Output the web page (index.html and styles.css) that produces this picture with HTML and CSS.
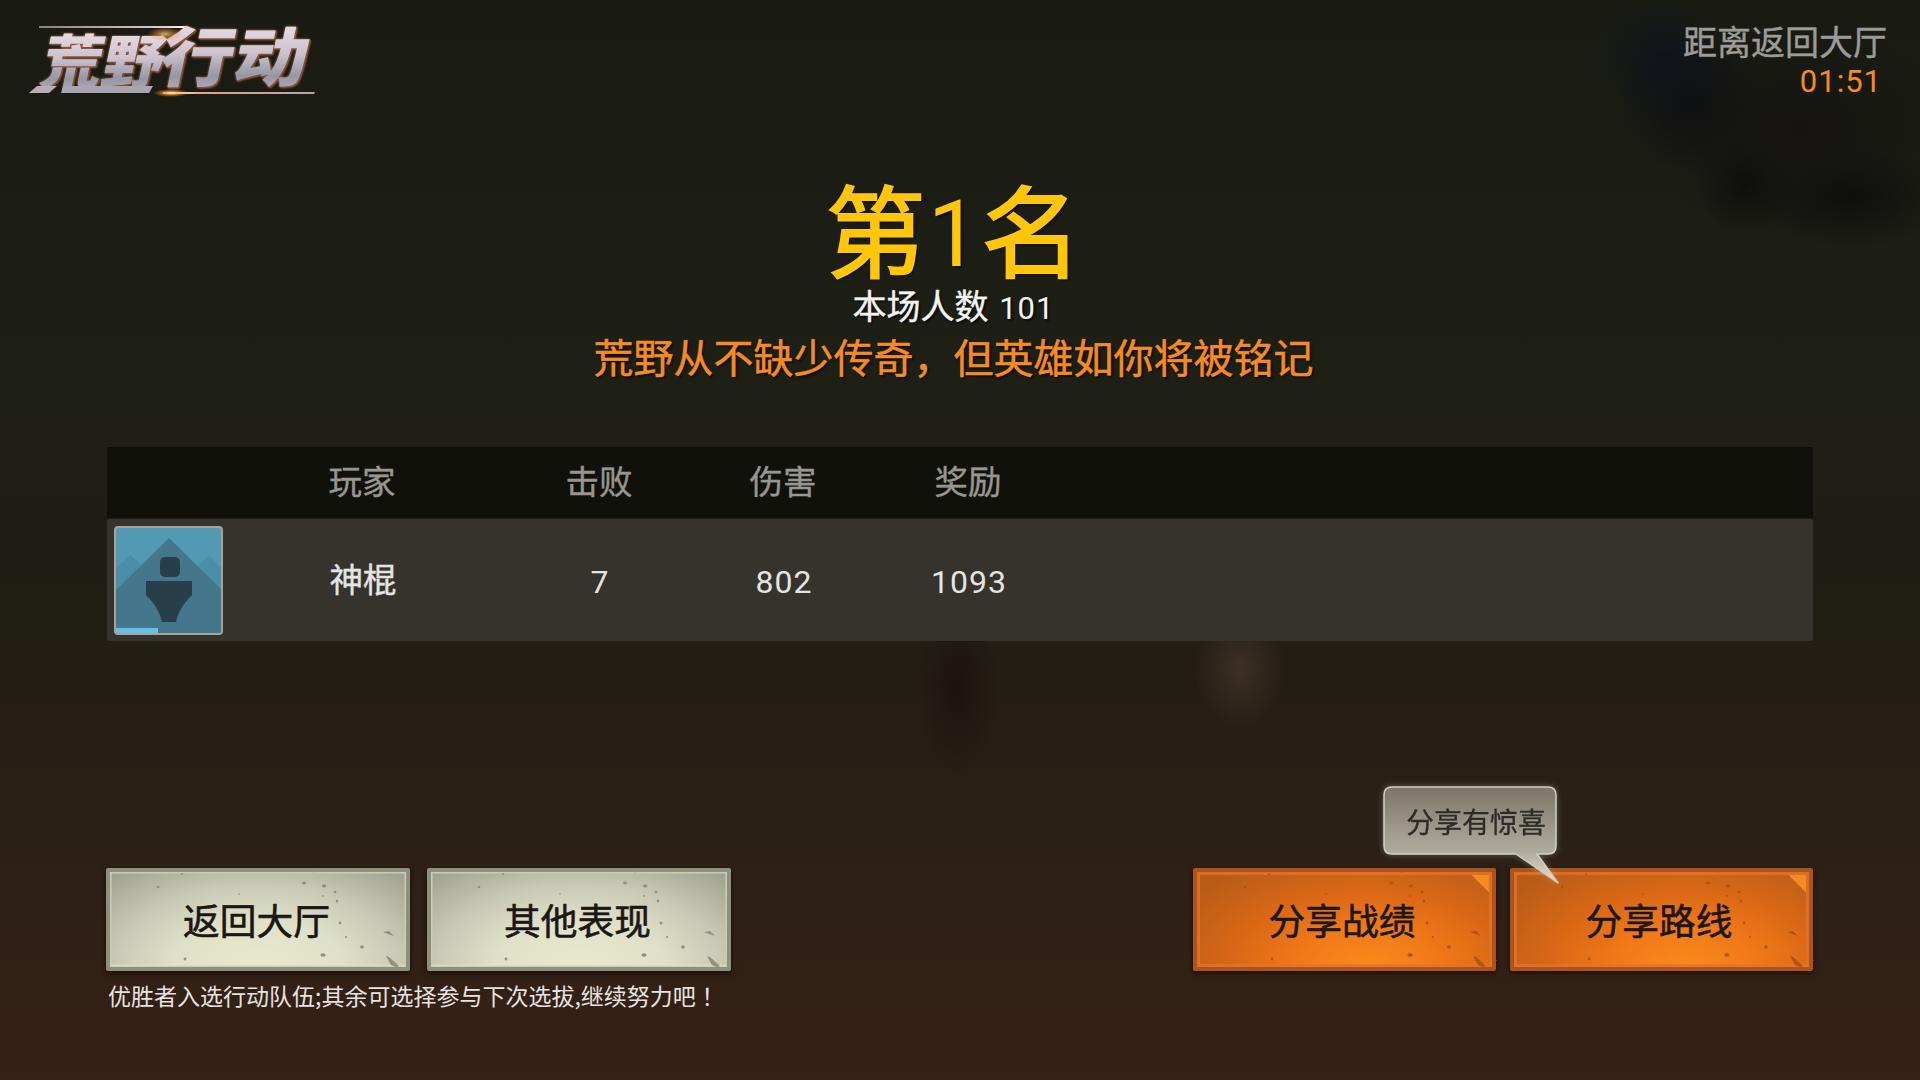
FILE: index.html
```
<!DOCTYPE html>
<html lang="zh-CN">
<head>
    <meta charset="UTF-8">
    <title>荒野行动 - 结算</title>
    <link rel="stylesheet" href="styles.css">
</head>
<body>
    <!-- Shared shapes -->
    <svg class="defs" width="0" height="0">
        <symbol id="scratches" viewBox="0 0 304 103">
            <g fill="currentColor">
                <ellipse cx="198" cy="15" rx="2" ry="1.4"/>
                <ellipse cx="218" cy="18" rx="2.2" ry="1.4"/>
                <ellipse cx="229" cy="24" rx="1.4" ry="1.3"/>
                <ellipse cx="231" cy="33" rx="1.3" ry="1.5"/>
                <circle cx="217" cy="28" r="0.9"/>
                <circle cx="234" cy="55" r="1.4"/>
                <circle cx="240" cy="69" r="1"/>
                <circle cx="256" cy="79" r="1.8"/>
                <ellipse cx="217" cy="87" rx="2.6" ry="1.8"/>
                <circle cx="79" cy="91" r="1.4"/>
                <circle cx="52" cy="19" r="1.3"/>
                <circle cx="76" cy="6" r="1"/>
                <circle cx="133" cy="26" r="0.8"/>
                <circle cx="208" cy="3" r="1.4"/>
                <circle cx="301" cy="27" r="1.2"/>
                <path d="M277 64l6-1 5 5-6-2z"/>
                <path d="M280 88l3 1 10 9-3 1-5-2z"/>
                <path d="M300 91l4 1-2 3z"/>
            </g>
        </symbol>
    </svg>

    <header class="top">
        <svg class="logo" width="300" height="84" viewBox="0 0 300 84">
            <defs>
                <linearGradient id="metal" x1="0" y1="0" x2="0" y2="1">
                    <stop offset="0.1" stop-color="#efe3e9"/>
                    <stop offset="0.5" stop-color="#cdc4d0"/>
                    <stop offset="0.75" stop-color="#9596a6"/>
                    <stop offset="1" stop-color="#c6b9bd"/>
                </linearGradient>
                <linearGradient id="line-top" x1="0" x2="1">
                    <stop offset="0" stop-color="#8b7f85"/>
                    <stop offset="0.8" stop-color="#d8cccf"/>
                    <stop offset="0.96" stop-color="#fff3d8"/>
                    <stop offset="1" stop-color="#e58c4a"/>
                </linearGradient>
                <linearGradient id="line-bottom" x1="0" x2="1">
                    <stop offset="0" stop-color="#ff8f32"/>
                    <stop offset="0.08" stop-color="#fff0c4"/>
                    <stop offset="0.25" stop-color="#e0a48c"/>
                    <stop offset="1" stop-color="#b7a5aa"/>
                </linearGradient>
                <radialGradient id="spark">
                    <stop offset="0" stop-color="#fff6d6"/>
                    <stop offset="0.3" stop-color="#ffb45c" stop-opacity="0.8"/>
                    <stop offset="1" stop-color="#ff7a20" stop-opacity="0"/>
                </radialGradient>
            </defs>
            <g class="logo-text" fill="url(#metal)">
                <text transform="translate(23 67) skewX(-12) scale(1 0.88)" font-size="66" textLength="122" lengthAdjust="spacingAndGlyphs">荒野</text>
                <text transform="translate(141 65) skewX(-12) scale(1 0.98)" font-size="66" textLength="148" lengthAdjust="spacingAndGlyphs">行动</text>
            </g>
            <path d="M14 77l8-7h20l-8 7z" fill="#b9aeb7"/>
            <path d="M48 70h90l-4 7H46z" fill="#a9a5b1"/>
            <path d="M24 10h150l-5 2H24z" fill="url(#line-top)"/>
            <path d="M148 76h152l-1 2H148z" fill="url(#line-bottom)"/>
            <ellipse cx="150" cy="18" rx="18" ry="7" fill="url(#spark)" opacity="0.7"/>
            <ellipse cx="156" cy="77" rx="18" ry="4" fill="url(#spark)"/>
        </svg>
        <div class="countdown">
            <p>距离返回大厅</p>
            <p class="time">01:51</p>
        </div>
    </header>

    <section class="result">
        <h1>第<span>1</span>名</h1>
        <p class="total">本场人数 <span>101</span></p>
        <p class="slogan">荒野从不缺少传奇，但英雄如你将被铭记</p>
    </section>

    <section class="board">
        <div class="row head">
            <span></span>
            <span>玩家</span>
            <span>击败</span>
            <span>伤害</span>
            <span>奖励</span>
        </div>
        <div class="row player">
            <svg class="avatar" width="109" height="109" viewBox="0 0 109 109">
                <rect x="1" y="1" width="107" height="107" rx="3" fill="#529ab4"/>
                <path d="M2 42L17 29l15 15v30H2zM107 42L95 29 80 44v30h27z" fill="#4b8ea8"/>
                <path d="M2 64L55 12l52 51v44H2z" fill="#44778c"/>
                <rect x="46" y="31" width="20" height="20" rx="5" fill="#283f4a"/>
                <path d="M32 55h46v14C68 79 64 87 62 96H48C46 87 42 79 32 69z" fill="#283f4a"/>
                <rect x="2" y="102" width="42" height="5" fill="#62c2e4"/>
                <rect x="1" y="1" width="107" height="107" rx="3" fill="none" stroke="#a3a4a0" stroke-width="2"/>
            </svg>
            <span class="name">神棍</span>
            <span class="num">7</span>
            <span class="num">802</span>
            <span class="num">1093</span>
        </div>
    </section>

    <footer class="bottom">
        <div class="actions">
            <button class="btn light"><svg class="marks"><use href="#scratches"/></svg>返回大厅</button>
            <button class="btn light"><svg class="marks"><use href="#scratches"/></svg>其他表现</button>
        </div>
        <div class="actions share">
            <button class="btn orange"><svg class="marks"><use href="#scratches"/></svg>分享战绩</button>
            <button class="btn orange"><svg class="marks"><use href="#scratches"/></svg>分享路线</button>
            <div class="bubble">
                <svg width="186" height="108" viewBox="0 0 186 108">
                    <defs>
                        <linearGradient id="bubble-fill" x1="0" y1="0" x2="0" y2="1">
                            <stop offset="0" stop-color="#7c7669"/>
                            <stop offset="0.68" stop-color="#b0ac9d"/>
                            <stop offset="0.8" stop-color="#c3bfae"/>
                            <stop offset="1" stop-color="#f5dfcb"/>
                        </linearGradient>
                    </defs>
                    <path d="M14 5h156q8 0 8 8v51q0 8-8 8h-11l21 29L138 72H14q-8 0-8-8V13q0-8 8-8z" fill="url(#bubble-fill)" stroke="#d2cfc5" stroke-width="1.5" stroke-linejoin="round"/>
                </svg>
                <span>分享有惊喜</span>
            </div>
        </div>
    </footer>
    <p class="note">优胜者入选行动队伍;其余可选择参与下次选拔,继续努力吧<span lang="zh-TW">！</span></p>
</body>
</html>
```

FILE: styles.css
```
* {
    box-sizing: border-box;
}

body {
    width: 1920px;
    height: 1080px;
    margin: 0;
    overflow: hidden;
    font-family: "Noto Sans CJK SC", sans-serif;
    color: #e6e4e2;
    background:
        radial-gradient(ellipse 70px 60px at 1665px 60px, rgba(12, 16, 32, 0.65), transparent),
        radial-gradient(ellipse 75px 70px at 1690px 105px, rgba(10, 11, 16, 0.65), transparent),
        radial-gradient(ellipse 50px 50px at 1745px 185px, rgba(10, 10, 11, 0.7), transparent),
        radial-gradient(ellipse 95px 50px at 1850px 198px, rgba(10, 10, 11, 0.7), transparent),
        radial-gradient(ellipse 160px 110px at 1800px 130px, rgba(20, 18, 17, 0.8), transparent),
        radial-gradient(ellipse 42px 85px at 958px 690px, rgba(25, 14, 13, 0.7), transparent),
        radial-gradient(ellipse 46px 60px at 1240px 668px, rgba(78, 58, 50, 0.6), transparent),
        linear-gradient(#191b13 0, #1e1f15 35%, #211e14 58%, #2a2016 76%, #382115 100%);
}

p, h1 {
    margin: 0;
    font-weight: normal;
}

.defs {
    position: absolute;
}

.top {
    display: flex;
    justify-content: space-between;
    height: 168px;
    padding: 16px 33px 0 15px;
}

.logo {
    overflow: visible;
}

.logo-text {
    font-weight: 900;
    filter: drop-shadow(1px 1px 0 #8a4a30) drop-shadow(0 0 1px #c9825c);
}

.countdown {
    font-size: 34px;
    line-height: 49px;
    color: #9c9b96;
    text-align: right;
    -webkit-text-stroke: 0.4px;
}

.countdown .time {
    padding-right: 5px;
    font-family: Roboto, sans-serif;
    font-size: 31px;
    line-height: 34px;
    letter-spacing: 1px;
    color: #f58c23;
    -webkit-text-stroke: 0;
}

.result {
    display: flex;
    flex-direction: column;
    align-items: center;
    height: 279px;
    padding-right: 13px;
    text-shadow: 2px 2px 2px rgba(0, 0, 0, 0.6);
}

.result h1 {
    display: flex;
    align-items: center;
    height: 118px;
    font-size: 100px;
    line-height: 118px;
    color: #ffc60c;
    -webkit-text-stroke: 2px #ffc60c;
}

.result h1 span {
    width: 56px;
    padding-top: 16px;
    font-family: Roboto, sans-serif;
    font-size: 92px;
    text-align: center;
    -webkit-text-stroke: 0;
}

.total {
    font-size: 34px;
    line-height: 38px;
    color: #f4f4f2;
    -webkit-text-stroke: 0.4px;
}

.total span {
    margin-left: 3px;
    font-family: Roboto, sans-serif;
    font-size: 31px;
    letter-spacing: 1px;
    -webkit-text-stroke: 0;
}

.slogan {
    font-size: 40px;
    line-height: 56px;
    color: #f58c23;
    -webkit-text-stroke: 0.5px;
}

.board {
    width: 1706px;
    margin-left: 107px;
}

.row {
    display: grid;
    grid-template-columns: 116px 278px 196px 172px 198px;
    align-items: center;
    font-size: 33.5px;
    text-align: center;
    -webkit-text-stroke: 0.4px;
}

.head {
    height: 71px;
    padding-bottom: 6px;
    color: #98968f;
    background: rgba(12, 12, 7, 0.7);
}

.player {
    height: 122px;
    margin-top: 1px;
    background: #35332b;
    border-radius: 3px;
}

.avatar {
    margin-left: 7px;
}

.name {
    padding: 0 0 5px 2px;
}

.num {
    padding: 3px 0 0 2px;
    font-family: Roboto, sans-serif;
    font-size: 32px;
    letter-spacing: 1px;
    -webkit-text-stroke: 0;
}

.bottom {
    display: flex;
    justify-content: space-between;
    width: 1707px;
    margin: 227px 0 0 106px;
}

.actions {
    display: flex;
    gap: 17px;
}

.share {
    position: relative;
    gap: 14px;
}

.btn {
    position: relative;
    width: 304px;
    height: 103px;
    padding: 0 3px 1px 0;
    border: 4px solid;
    border-radius: 2px;
    font-family: inherit;
    font-size: 36.7px;
    color: #1b1715;
    box-shadow: 0 2px 5px rgba(0, 0, 0, 0.6);
    -webkit-text-stroke: 0.6px;
}

.light {
    border-color: #8f907c;
    background: radial-gradient(ellipse 64% 115% at 50% 100%, #e8e9cc 0, #dfe0c7 45%, #c8cab5 75%, #9fa18f 115%);
    box-shadow: inset 0 0 0 1.5px #cbccb8, inset 0 -2px 1px #f4f2c7, 0 2px 5px rgba(0, 0, 0, 0.6);
}

.orange {
    width: 303px;
    padding-right: 5px;
    border-color: #ae531c;
    background:
        linear-gradient(to bottom left, #f58a23 50%, transparent 51%) right 3px top 3px / 17px 17px no-repeat,
        radial-gradient(ellipse 65% 115% at 58% 100%, #fa8b1a 0, #f17818 38%, #d96816 70%, #ba5c18 110%);
    box-shadow: inset 0 0 0 3px rgba(224, 116, 44, 0.8), 0 2px 5px rgba(0, 0, 0, 0.6);
}

.marks {
    position: absolute;
    top: -4px;
    left: -4px;
    width: 304px;
    height: 103px;
    color: #8f9182;
}

.orange .marks {
    color: #ad5515;
}

/* Speech bubble over the share buttons */
.bubble {
    position: absolute;
    top: -86px;
    left: 185px;
    width: 186px;
    height: 108px;
    color: #2d2b28;
    filter: drop-shadow(0 0 3px rgba(210, 205, 195, 0.35));
}

.bubble span {
    position: absolute;
    top: 19px;
    left: 28px;
    font-size: 28px;
    line-height: 40px;
    white-space: nowrap;
    -webkit-text-stroke: 0.3px;
}

.note {
    margin: 7px 0 0 108px;
    font-size: 23px;
    line-height: 34px;
}

.note span {
    font-family: "Noto Sans CJK TC", sans-serif;
}
```
